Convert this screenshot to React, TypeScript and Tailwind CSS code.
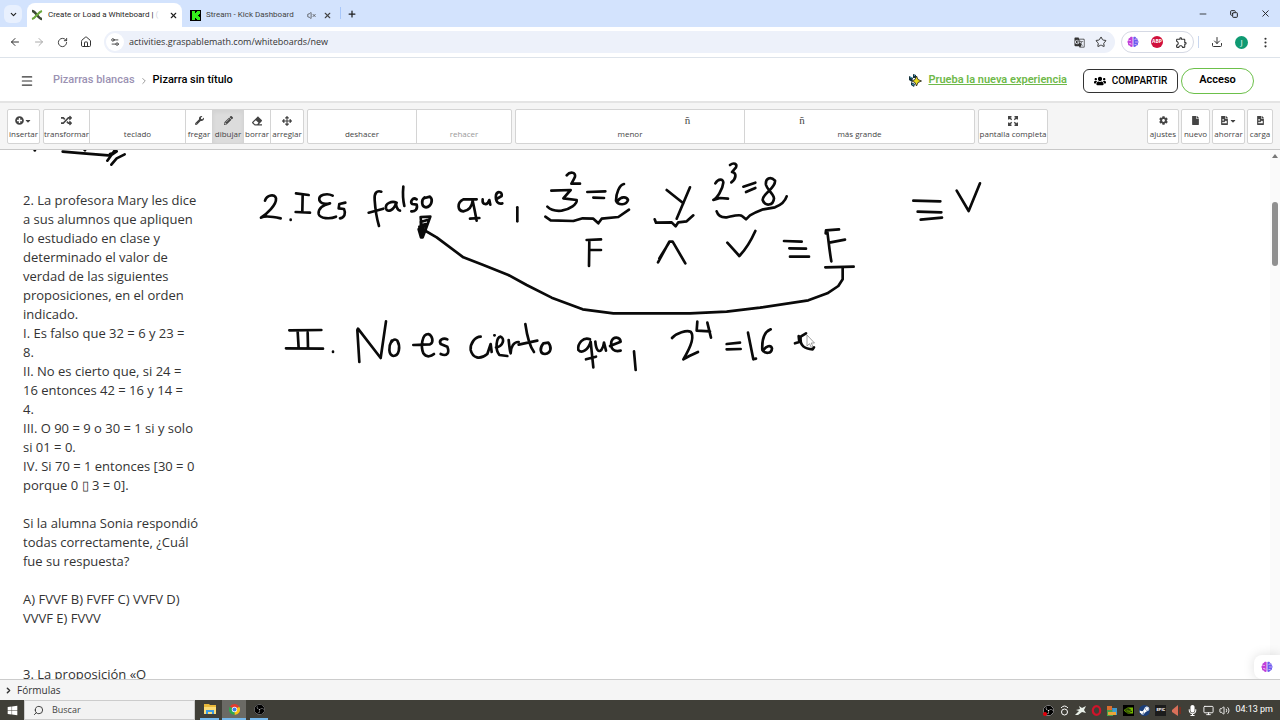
import type { ReactNode } from 'react'
import {
  ArrowLeft, ArrowRight, ChevronDown, ChevronRight, Download, EllipsisVertical, House,
  Menu, Minus, Plus, RotateCw, Search, Star, VolumeX, X, Copy, Settings2, Monitor, Volume2,
} from 'lucide-react'
import {
  FaArrowsAlt, FaCaretDown, FaCog, FaEraser, FaFile, FaFileImage, FaMicrophone, FaPencilAlt,
  FaPlusCircle, FaRandom, FaSteamSymbol, FaUsers, FaWindows, FaWrench,
} from 'react-icons/fa'
import { MdGTranslate, MdOutlineExtension } from 'react-icons/md'
import { SiNvidia, SiObsstudio } from 'react-icons/si'

const exercise = [
  '2. La profesora Mary les dice',
  'a sus alumnos que apliquen',
  'lo estudiado en clase y',
  'determinado el valor de',
  'verdad de las siguientes',
  'proposiciones, en el orden',
  'indicado.',
  'I. Es falso que 32 = 6 y 23 =',
  '8.',
  'II. No es cierto que, si 24 =',
  '16 entonces 42 = 16 y 14 =',
  '4.',
  'III. O 90 = 9 o 30 = 1 si y solo',
  'si 01 = 0.',
  'IV. Si 70 = 1 entonces [30 = 0',
  'porque 0 ▯ 3 = 0].',
  '',
  'Si la alumna Sonia respondió',
  'todas correctamente, ¿Cuál',
  'fue su respuesta?',
  '',
  'A) FVVF B) FVFF C) VVFV D)',
  'VVVF E) FVVV',
]

// Pen strokes, three units to the pixel, grouped by where they start on the board
const ink = [
  {
    x: 0,
    strokes: [
      'M188 5L250 10L325 16', 'M345 0L322 32M350 4L330 18M330 12L342 8', 'M374 13L350 25L334 44', 'M104 1L105 1', 'M254 0L255 1',
    ],
  },
  {
    x: 250,
    strokes: [
      'M45 152C50 135 75 130 78 145C80 165 50 192 33 203C45 196 70 200 92 205',
      'M122 209L122 210',
      'M138 130L176 135M158 134L157 184M137 186L180 188',
      'M248 137C230 128 205 135 208 150C212 162 228 163 240 160C220 164 204 175 206 192C210 206 240 208 258 200',
      'M286 158L268 162L266 175L282 177C288 190 284 202 270 205',
      'M394 125C380 120 372 130 374 150C376 180 380 205 387 228M356 188L400 176',
      'M440 158C425 152 405 160 408 175C412 190 432 180 438 160C438 172 445 182 450 182',
      'M460 110C458 130 460 155 463 168',
      'M500 148C488 140 480 155 486 162L500 164C504 178 495 185 484 184',
      'M524 142C512 150 515 172 528 172C545 170 550 148 540 140L524 144',
      'M512 201L541 200L528 236L518 262L513 262L506 238L514 226L512 201M512 216L532 210M508 230L524 240L514 256M514 226L528 222M515 236L517 254M512 222L520 232L526 226M511 240L519 246',
      'M522 240L560 262L640 322L700 345L775 375L830 405L905 443L998 478L1090 490L1320 490L1430 485L1530 473L1675 451L1732 430L1765 408L1778 388L1778 355',
      'M680 148L640 148C620 158 622 182 640 184C655 182 666 170 668 152C672 170 676 190 680 212M660 206L688 204',
      'M698 148C696 165 712 168 718 150L721 164',
      'M738 148L755 138C758 125 742 122 738 135C735 155 745 163 757 160',
      'M802 172L802 214',
      'M118 541L214 540M143 545L146 595M173 548L174 592M108 595L219 596',
      'M249 605L249 606',
      'M328 636L322 540L324 536L392 624L408 514',
      'M425 572C415 590 415 615 430 618C448 618 452 590 442 572C435 565 428 570 425 576',
      'M490 585L540 583C552 578 548 556 535 552C515 552 512 590 520 610C530 625 545 618 552 612',
      'M592 568C580 562 565 570 572 582L592 590C600 610 590 620 572 612',
      'M692 560C675 560 660 580 662 600C668 625 690 630 712 612L722 582L725 606M733 556L734 556',
      'M738 592C760 590 765 565 752 560C738 562 735 600 748 615L772 618',
      'M776 570C778 590 780 605 782 610C782 590 792 575 806 576',
      'M826 522C830 550 840 590 852 606M806 584L862 572',
      'M880 580C868 595 870 612 885 612C905 610 905 590 895 578L880 580',
    ],
  },
  {
    x: 530,
    strokes: [
      'M110 76C120 64 138 66 135 80C130 92 125 98 124 101L150 101',
      'M64 122L122 120L100 145L140 150C142 162 120 178 95 182C75 184 60 178 52 170',
      'M172 126L226 124M190 143L222 144',
      'M282 102C268 105 258 130 258 152C265 168 290 165 294 150C290 138 272 140 264 152',
      'M46 200L62 211L130 213L158 205L190 206L205 220L215 206L265 201L297 179',
      'M410 120L460 160M480 112L440 206',
      'M374 208L378 218L425 217L437 229L445 217L470 214L490 196',
      'M556 100C565 85 580 86 580 98C578 120 560 145 550 150L570 144L594 146',
      'M600 45C612 36 622 42 618 52L606 66C620 68 620 85 604 97',
      'M640 110L676 98M648 126L676 114',
      'M735 92C722 78 705 84 708 105C712 120 730 130 732 145C730 168 705 170 698 150C697 130 738 115 735 92',
      'M560 184C565 200 575 203 590 202C610 198 630 192 636 198L648 208L660 196C680 185 690 182 700 178L735 172C755 164 765 155 770 139',
      'M178 270L177 348M170 270L213 268M178 300L213 300',
      'M384 337L418 275L428 275L466 340M388 325L416 280',
      'M592 278L628 318Q655 290 676 243',
      'M180 568C160 560 142 580 145 600C155 612 175 600 182 575L190 652M168 628L198 620',
      'M196 575C198 600 206 608 214 600C222 590 222 575 222 578L228 602',
      'M240 588L272 575C270 560 250 558 244 575C240 600 255 606 272 602',
      'M312 604L317 660',
      'M426 564C440 548 470 540 482 545C495 560 480 595 460 628L478 618L504 606',
      'M502 515L500 542L540 544M532 518L543 563',
      'M590 582L630 578M590 598L632 597',
      'M654 548L670 628L678 626',
      'M722 538C705 545 695 565 697 600C705 612 725 612 726 595C722 583 708 590 702 598',
    ],
  },
  {
    x: 740,
    strokes: [
      'M132 273L185 275M148 295L198 296M150 320L207 320',
      'M297 238L258 241L257 250M262 245C266 275 268 300 274 334M268 278L315 269',
      'M256 352L341 350',
      'M520 152L601 154M533 185L604 187M542 209L606 203',
      'M650 122L686 183L720 100',
      'M165 580L178 576L176 558M182 560C178 588 195 597 218 598L222 592M182 560L198 550',
    ],
  },
]

function Tool({ label, icon, className }: { label: string; icon?: ReactNode; className: string }) {
  return (
    <button className={`flex h-full shrink-0 flex-col items-center justify-end gap-0.5 pb-1 ${className}`}>
      <span className="flex h-3 items-center text-[11px]">{icon}</span>
      <span className="text-[8px] leading-[10px] whitespace-nowrap">{label}</span>
    </button>
  )
}

function Group({ children }: { children: ReactNode }) {
  return (
    <div className="flex h-[35px] divide-x divide-[#d4d4d4] overflow-hidden rounded-xs border border-[#d4d4d4] bg-white">
      {children}
    </div>
  )
}

function BrainIcon() {
  return (
    <svg className="size-3" viewBox="0 0 12 12">
      <path d="M5.600 1C4 .2 3 1 2.800 2C1.500 2.200 1.200 3.200 1.500 4C.3 4.800.2 6.400 1 7.200C.8 8.600 1.600 9.500 2.600 9.600C3.200 11 4.800 11.300 5.600 10.500z" fill="#c03fd8" />
      <path d="M6.400 1C8 .2 9 1 9.200 2C10.500 2.200 10.800 3.200 10.500 4C11.700 4.800 11.800 6.400 11 7.200C11.200 8.600 10.400 9.500 9.400 9.600C8.800 11 7.200 11.300 6.400 10.500z" fill="#6a5cf0" />
      <path d="M1.500 4.500h2.500M2 7.500h2V9M8 4V3h2M8 6h3M7.500 8.500h2" fill="none" stroke="#f4c6f0" strokeWidth="0.7" />
    </svg>
  )
}

function ExpandIcon() {
  return (
    <svg className="size-[10px]" viewBox="0 0 10 10" fill="none" stroke="#444" strokeWidth="1.400">
      <path d="M3.500.7H.7V3.500M1 1L3.700 3.700M6.500.7H9.300V3.500M9 1L6.300 3.700M3.500 9.300H.7V6.500M1 9L3.700 6.300M6.500 9.300H9.300V6.500M9 9L6.300 6.300" />
    </svg>
  )
}

function TabStrip() {
  return (
    <div className="flex h-[27px] items-end bg-[#d3e3fd] font-['Roboto',sans-serif] text-[8px] text-[#1f1f1f]">
      <button aria-label="Buscar pestañas" className="mb-1 ml-1 flex h-[18px] w-[18px] items-center justify-center rounded-md bg-[#e8f0fe]">
        <ChevronDown size={9} strokeWidth={3} />
      </button>
      <div className="ml-[5px] flex h-6 w-[155px] items-center rounded-t-lg bg-white px-1">
        <svg className="size-3 shrink-0" viewBox="0 0 12 12" fill="none">
          <path d="M1 2C5 2 7 10 11 10" stroke="#3c4a35" strokeWidth="2.4" />
          <path d="M1 10C5 9 7 3 11 2" stroke="#6ba83c" strokeWidth="2" />
        </svg>
        <span className="ml-[5px] whitespace-nowrap">Create or Load a Whiteboard | <span className="text-gray-300">(</span></span>
        <button aria-label="Cerrar" className="ml-auto shrink-0"><X size={9} strokeWidth={3} /></button>
      </div>
      <div className="flex h-6 w-[158px] items-center pl-2 text-[#444]">
        <svg className="size-[11px] shrink-0" viewBox="0 0 11 11">
          <rect width="11" height="11" fill="#000" />
          <path d="M2 1h3v2h1V2h1V1h3v3H9v1H8v1h1v1h1v3H7V9H6V8H5v2H2z" fill="#35f01c" />
        </svg>
        <span className="ml-[5px] whitespace-nowrap">Stream - Kick Dashboard</span>
        <VolumeX size={9} className="ml-auto shrink-0" />
        <button aria-label="Cerrar" className="mr-2 ml-[7px] shrink-0"><X size={9} strokeWidth={3} /></button>
      </div>
      <span className="mb-2 h-3 w-px bg-[#a8c7fa]" />
      <button aria-label="Nueva pestaña" className="mb-2 ml-[6px]"><Plus size={10} strokeWidth={3} /></button>
      <div className="mr-[9px] mb-2 ml-auto flex items-center gap-[22px]">
        <button aria-label="Minimizar"><Minus size={10} /></button>
        <button aria-label="Restaurar" className="-scale-x-100"><Copy size={8} strokeWidth={3} className="rotate-90" /></button>
        <button aria-label="Cerrar ventana"><X size={11} /></button>
      </div>
    </div>
  )
}

function AddressBar() {
  return (
    <div className="flex h-[31px] items-center border-b border-[#dde3ea] text-[#333]">
      <div className="ml-[9px] flex items-center gap-3">
        <button aria-label="Atrás"><ArrowLeft size={12} /></button>
        <button aria-label="Adelante" className="text-[#aaa]"><ArrowRight size={12} /></button>
        <button aria-label="Recargar"><RotateCw size={11} /></button>
        <button aria-label="Inicio"><House size={12} /></button>
      </div>
      <div className="ml-3 flex h-[22px] flex-1 items-center rounded-full bg-[#edf1fa] px-0.5">
        <span className="flex size-[18px] items-center justify-center rounded-full bg-white"><Settings2 size={10} /></span>
        <input aria-label="Dirección" defaultValue="activities.graspablemath.com/whiteboards/new" className="ml-[5px] flex-1 bg-transparent text-[9px] outline-none" />
        <MdGTranslate size={11} />
        <Star size={12} className="mr-1.5 ml-[10px]" />
      </div>
      <div className="ml-[6px] flex h-[22px] items-center gap-3 rounded-full border border-[#d5d9e4] px-[5px]">
        <BrainIcon />
        <span className="flex h-3 w-3 items-center justify-center rounded-full bg-[#d0103c] text-[5px] font-bold text-white">ABP</span>
        <MdOutlineExtension size={13} />
      </div>
      <span className="mr-3 ml-1 h-3 w-px bg-[#c9d7ef]" />
      <Download size={12} />
      <span className="ml-3 flex size-[13px] items-center justify-center rounded-full bg-[#0f9a72] text-[8px] text-white">J</span>
      <EllipsisVertical size={13} className="mr-2 ml-[11px]" />
    </div>
  )
}

function Header() {
  return (
    <header className="flex h-[43px] items-center pt-0.5 pr-[26px] pl-5 font-['Roboto',sans-serif] text-[11px] font-medium">
      <button aria-label="Menú"><Menu size={14} className="text-[#333]" /></button>
      <nav className="ml-[19px] flex items-center gap-1">
        <a href="#" className="text-[#9b92b3]">Pizarras blancas</a>
        <ChevronRight size={10} className="text-[#888]" />
        <span className="text-black">Pizarra sin título</span>
      </nav>
      <svg className="mr-1.5 ml-auto size-[13px]" viewBox="0 0 13 13">
        <path d="M0 2L4 4L3 8L0 6zM2 8l4 2-1 3-3-2zM4 0l3 1 0 3-3 0z" fill="#16323c" />
        <path d="M1 3l2 1M3 10l2 1M5 1l1 1" stroke="#3fa3c8" />
        <path d="M7.500 2L9 5.500L12.500 7L9 8.500L7.500 12L6 8.500L3 7L6 5.500z" fill="#e9dd1c" stroke="#1c1c1c" strokeWidth="0.8" />
      </svg>
      <a href="#" className="font-semibold text-[#6fb94a] underline">Prueba la nueva experiencia</a>
      <button className="ml-4 flex h-6 w-[95px] items-center justify-center gap-1.5 rounded-md border border-[#333] text-[10px] text-black">
        <FaUsers size={12} />
        COMPARTIR
      </button>
      <button className="ml-[3px] h-[26px] w-[73px] rounded-full border border-[#6cc04a] font-semibold text-black">Acceso</button>
    </header>
  )
}

function Toolbar() {
  return (
    <div className="flex h-[49px] items-center gap-[3px] border-t-2 border-b border-t-[#e4e4e4] border-b-[#c8c8c8] bg-[#f5f5f5] px-[7px] text-[#444]">
      <Group><Tool className="w-[31px]" label="insertar" icon={<><FaPlusCircle size={9} /><FaCaretDown size={8} /></>} /></Group>
      <Group>
        <Tool className="w-[46px]" label="transformar" icon={<FaRandom />} />
        <Tool className="w-24" label="teclado" />
        <Tool className="w-[27px]" label="fregar" icon={<FaWrench size={9} />} />
        <Tool className="w-[31px] bg-[#dcdcdc] shadow-inner" label="dibujar" icon={<FaPencilAlt size={9} />} />
        <Tool className="w-[27px]" label="borrar" icon={<FaEraser size={10} />} />
        <Tool className="w-8" label="arreglar" icon={<FaArrowsAlt size={10} />} />
      </Group>
      <Group>
        <Tool className="w-[109px]" label="deshacer" />
        <Tool className="w-[94px] text-[#999]" label="rehacer" />
      </Group>
      <Group>
        <Tool className="w-[229px]" label="menor" icon={<span className="pl-[115px] font-['Liberation_Serif',serif]">ñ</span>} />
        <Tool className="w-[229px]" label="más grande" icon={<span className="pr-[115px] font-['Liberation_Serif',serif]">ñ</span>} />
      </Group>
      <Group><Tool className="w-[68px]" label="pantalla completa" icon={<ExpandIcon />} /></Group>
      <div className="ml-auto flex gap-[2px]">
        <Group><Tool className="w-[30px]" label="ajustes" icon={<FaCog size={9} />} /></Group>
        <Group><Tool className="w-[27px]" label="nuevo" icon={<FaFile size={9} />} /></Group>
        <Group><Tool className="w-[31px]" label="ahorrar" icon={<><FaFileImage size={9} /><FaCaretDown size={8} /></>} /></Group>
        <Group><Tool className="w-6" label="carga" icon={<FaFileImage size={9} />} /></Group>
      </div>
    </div>
  )
}

function Board() {
  return (
    <main className="relative flex min-h-0 flex-1 overflow-hidden bg-white">
      <div className="flex-1 pt-[41px] pl-[23px] text-[13px] leading-[19px] whitespace-pre text-[#333]">
        {exercise.map((line, i) => <p key={i} className="h-[19px]">{line}</p>)}
        <p className="pt-[37px]">3. La proposición «O</p>
      </div>
      <svg className="absolute top-0 left-0 h-[528px] w-[1270px]" viewBox="0 0 1270 528" fill="none" aria-hidden="true">
        {ink.map((part) => (
          <g key={part.x} transform={`translate(${part.x} 0) scale(0.33333)`} stroke="#0a0a0a" strokeWidth="8" strokeLinecap="round" strokeLinejoin="round">
            {part.strokes.map((d) => <path key={d} d={d} />)}
          </g>
        ))}
        {/* mouse pointer */}
        <path d="M807 185v11l2.500-2.300 1.800 3.600 1.600-.8-1.700-3.500h3.300z" fill="#fff" stroke="#888" strokeWidth="0.8" />
      </svg>
      <div className="flex w-[10px] flex-col items-center bg-[#fafafa] pt-1">
        <svg className="h-1 w-1.5" viewBox="0 0 6 4"><path d="M0 4L3 0L6 4z" fill="#777" /></svg>
        <div className="mt-[44px] h-[64px] w-1.5 rounded-full bg-[#8f8f8f]" />
      </div>
      <button aria-label="Asistente" className="absolute right-0 bottom-0 flex h-6 w-[26px] items-center justify-center rounded-tl-lg rounded-bl-lg bg-white shadow-[0_0_12px_#0002]"><BrainIcon /></button>
    </main>
  )
}

function Taskbar() {
  return (
    <footer className="flex h-5 items-center bg-[#403f38] text-[9px] text-white">
      <button aria-label="Inicio" className="flex w-6 justify-center"><FaWindows size={11} /></button>
      <label className="flex h-5 w-[171px] items-center gap-2 border border-[#ccc] bg-[#f2f2f2] pl-2 text-[#333]">
        <Search size={11} className="-scale-x-100" />
        <input aria-label="Buscar" placeholder="Buscar" className="w-32 bg-transparent outline-none placeholder:text-[#444]" />
      </label>
      <button aria-label="Explorador" className="ml-[5px] flex h-5 w-[19px] items-center justify-center border-b-2 border-[#76b9ed]">
        <svg className="h-[10px] w-3" viewBox="0 0 12 10">
          <path d="M0 0h5l1 1h6v9H0z" fill="#e9b83a" />
          <path d="M0 3h12v7H0z" fill="#fbdc77" />
          <path d="M2 10V6h8v4H8V8H4v2z" fill="#3f9be0" />
        </svg>
      </button>
      <button aria-label="Chrome" className="ml-[3px] flex h-5 w-6 items-center justify-center border-b-2 border-[#76b9ed] bg-[#6b6a65]">
        <svg className="size-[11px]" viewBox="0 0 12 12">
          <path d="M6 6L.8 3A6 6 0 0 1 11.200 3z" fill="#e33b2e" />
          <path d="M6 6L11.200 3A6 6 0 0 1 6 12z" fill="#fbc116" />
          <path d="M6 6V12A6 6 0 0 1 .8 3z" fill="#2da94f" />
          <circle cx="6" cy="6" r="2.900" fill="#fff" />
          <circle cx="6" cy="6" r="2.200" fill="#3f7de8" />
        </svg>
      </button>
      <button aria-label="OBS" className="ml-1 flex h-5 w-[18px] items-center justify-center border-b-2 border-[#76b9ed]"><SiObsstudio size={11} className="rounded-full bg-black text-[#bbb]" /></button>
      <div className="ml-auto flex items-center gap-[5px] pr-[7px] font-['Roboto',sans-serif]">
        <span className="relative"><SiObsstudio size={11} className="rounded-full bg-black" /><span className="absolute bottom-0 left-0 size-1 rounded-full bg-red-600" /></span>
        <svg className="size-[11px]" viewBox="0 0 11 11" fill="none" stroke="#fff"><circle cx="5.500" cy="7" r="3" /><path d="M2 3Q5.500-1 9 3" /></svg>
        <svg className="size-[11px]" viewBox="0 0 11 11"><path d="M0 10L4 6L1 5L5 4L4 1L7 3L11 1L9 5L11 8L7 7L3 10z" fill="#e8f0e8" /></svg>
        <svg className="size-[11px]" viewBox="0 0 11 11"><ellipse cx="5.500" cy="5.500" rx="3.700" ry="4.300" fill="none" stroke="#d0142a" strokeWidth="2.200" /></svg>
        <svg className="size-[11px]" viewBox="0 0 11 11"><path d="M0 1h5v4H0z" fill="#d86d2e" /><path d="M0 5h6v6H0z" fill="#4aa04a" /><path d="M5 3h5v7H6z" fill="#3f9bd0" /><path d="M1 7h8v3H1z" fill="#e9a53a" /></svg>
        <span className="bg-black p-px"><SiNvidia size={9} className="text-[#76b900]" /></span>
        <FaSteamSymbol size={11} className="rounded-full bg-[#1b3f7a]" />
        <span className="flex h-[11px] w-[11px] items-center justify-center bg-[#1c1c1c] text-[4px] font-bold">EPIC</span>
        <svg className="size-[11px]" viewBox="0 0 11 11"><path d="M1 5L7 0V11L1 7z" fill="#d9705a" /><path d="M9 2V9" stroke="#8a2a1a" strokeWidth="1.500" /></svg>
        <FaMicrophone size={11} />
        <Monitor size={11} />
        <Volume2 size={11} />
        <span className="whitespace-nowrap">04:13 pm</span>
      </div>
    </footer>
  )
}

export default function App() {
  return (
    <div className="flex h-screen flex-col overflow-hidden bg-white font-['Open_Sans','Noto_Sans',sans-serif]">
      <TabStrip />
      <AddressBar />
      <Header />
      <Toolbar />
      <Board />
      <button className="flex h-[21px] items-center gap-1 border-t border-[#ccc] bg-[#f5f5f5] pl-1 text-[10px] text-[#333]">
        <ChevronRight size={9} strokeWidth={4} />
        Fórmulas
      </button>
      <Taskbar />
    </div>
  )
}
